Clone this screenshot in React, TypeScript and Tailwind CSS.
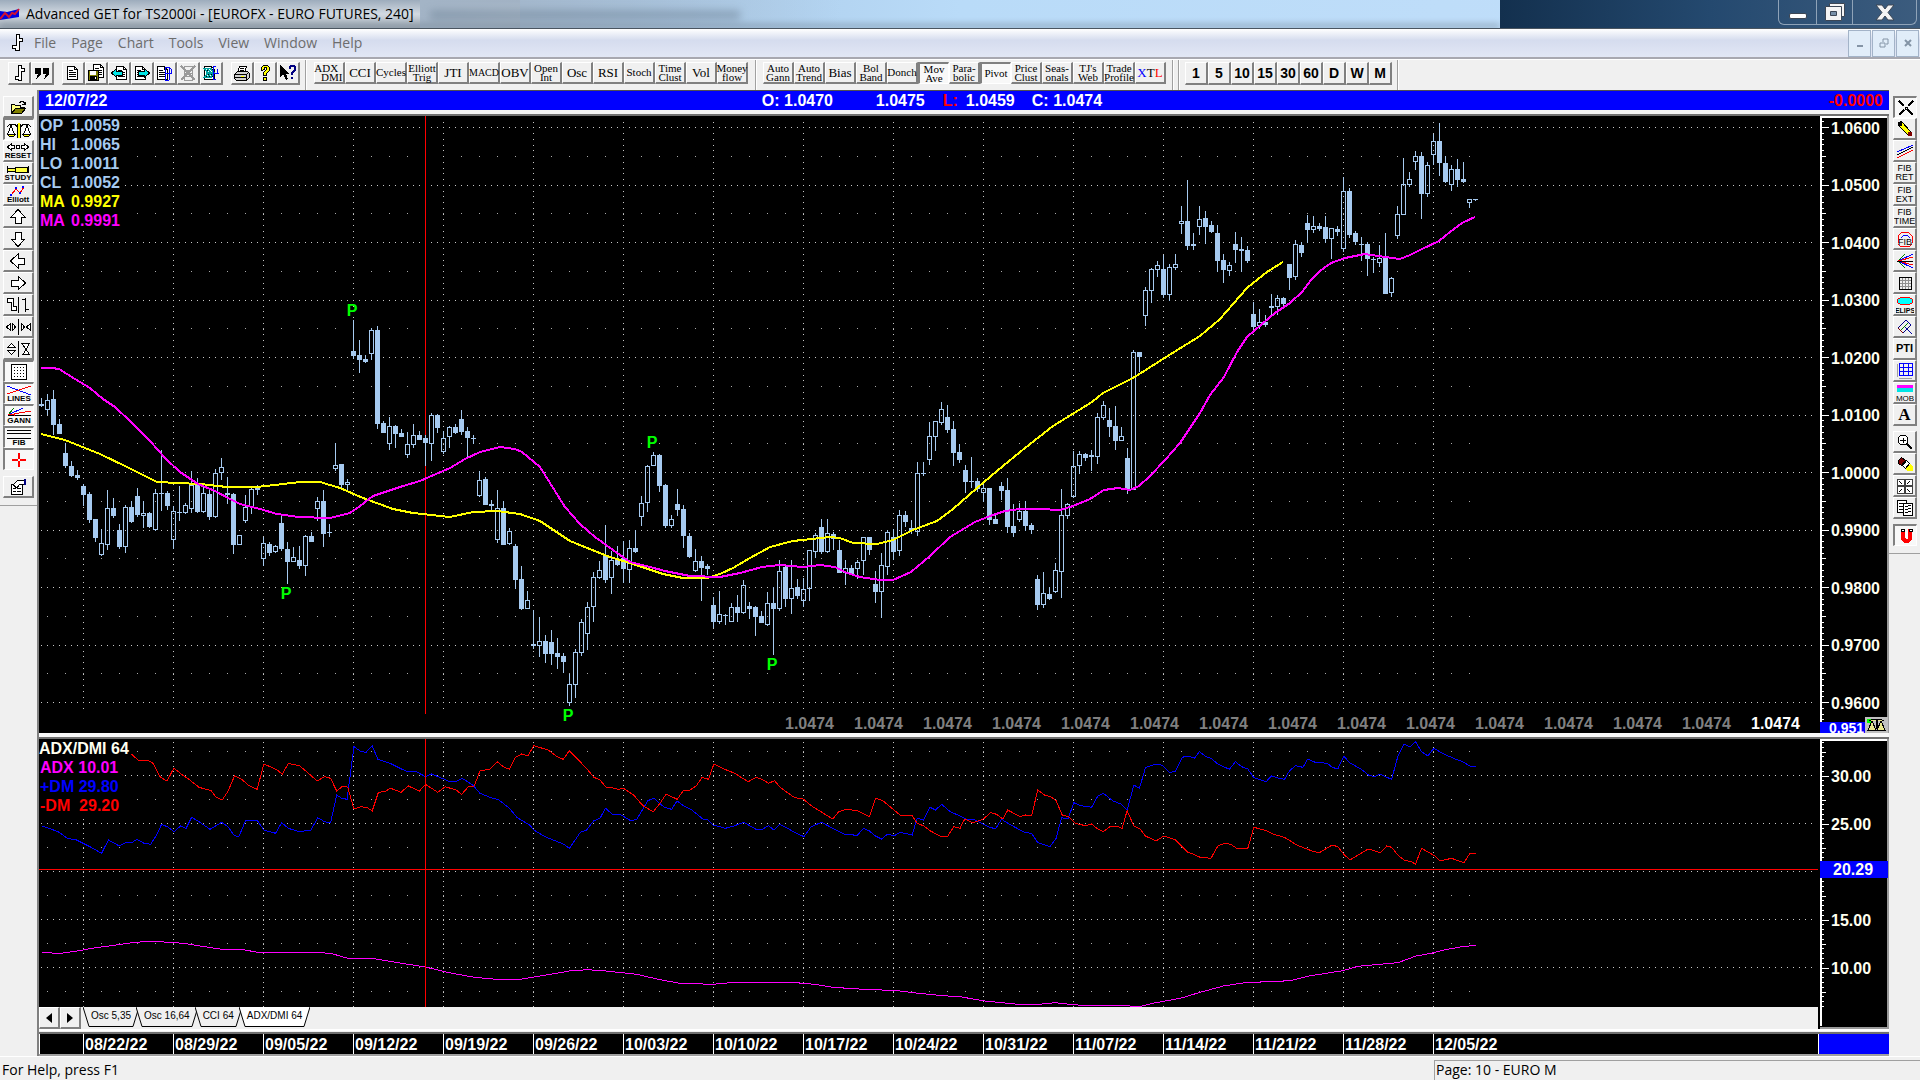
import React from "react";

type Point = [number, number];
// high, body top, body bottom, low, filled
type Candle = [number, number, number, number, number];

const LEFT = 39;
const CANDLE_STEP = 6;
const WEEK = 90;

const CANDLES: Candle[] = [
  [398, 404, 406, 407, 1], [394, 400, 410, 415, 0], [390, 399, 425, 435, 1], [419, 424, 434, 434, 1],
  [443, 453, 466, 468, 1], [461, 466, 476, 477, 1], [470, 475, 478, 480, 1], [484, 486, 495, 506, 1],
  [492, 494, 520, 523, 1], [519, 519, 538, 542, 1], [529, 543, 555, 556, 0], [490, 508, 545, 550, 0],
  [498, 508, 516, 518, 1], [524, 530, 547, 549, 1], [505, 507, 547, 553, 0], [501, 507, 522, 523, 1],
  [488, 496, 515, 517, 1], [501, 513, 516, 528, 0], [512, 513, 527, 528, 1], [489, 493, 530, 531, 0],
  [450, 493, 494, 511, 1], [491, 493, 506, 510, 1], [506, 511, 540, 549, 0], [486, 512, 513, 521, 1],
  [503, 505, 513, 514, 0], [471, 485, 509, 513, 0], [478, 485, 512, 513, 1], [484, 493, 512, 513, 0],
  [489, 494, 517, 520, 1], [469, 473, 517, 518, 0], [458, 467, 473, 480, 0], [477, 493, 495, 504, 1],
  [493, 494, 545, 554, 1], [535, 535, 545, 545, 0], [495, 507, 521, 523, 0], [487, 489, 507, 514, 0],
  [485, 488, 490, 495, 1], [537, 543, 559, 566, 0], [542, 544, 553, 556, 1], [545, 546, 552, 553, 0],
  [514, 523, 549, 551, 1], [542, 549, 562, 584, 1], [547, 557, 562, 562, 0], [546, 560, 566, 569, 1],
  [535, 536, 566, 576, 0], [532, 536, 542, 542, 1], [497, 501, 509, 521, 0], [490, 501, 534, 547, 1],
  [524, 532, 533, 537, 1], [443, 465, 469, 471, 0], [464, 464, 485, 490, 1], [479, 482, 485, 490, 0],
  [320, 351, 356, 359, 1], [340, 355, 360, 373, 1], [355, 359, 362, 363, 1], [328, 330, 354, 360, 0],
  [326, 330, 424, 429, 1], [421, 423, 433, 433, 1], [417, 426, 444, 450, 0], [425, 426, 434, 448, 1],
  [429, 433, 437, 437, 1], [432, 444, 455, 458, 0], [424, 435, 445, 448, 0], [431, 435, 440, 440, 1],
  [435, 438, 443, 466, 1], [413, 415, 444, 461, 0], [414, 415, 428, 433, 1], [431, 438, 452, 454, 0],
  [426, 427, 437, 448, 0], [424, 427, 433, 434, 1], [410, 419, 432, 435, 1], [427, 431, 438, 458, 1],
  [435, 438, 439, 444, 1], [471, 480, 496, 497, 0], [477, 479, 505, 505, 1], [500, 504, 506, 512, 1],
  [490, 508, 540, 543, 0], [501, 508, 545, 545, 1], [528, 531, 544, 545, 0], [544, 546, 580, 589, 1],
  [566, 579, 609, 610, 1], [591, 600, 609, 609, 0], [610, 644, 646, 649, 1], [617, 641, 646, 657, 0],
  [635, 641, 654, 663, 1], [630, 642, 654, 665, 1], [638, 653, 657, 669, 1], [653, 656, 662, 673, 1],
  [674, 684, 703, 706, 0], [649, 652, 685, 698, 0], [619, 622, 653, 656, 0], [602, 607, 634, 650, 0],
  [572, 577, 607, 622, 0], [561, 570, 578, 579, 0], [525, 555, 580, 583, 1], [551, 560, 578, 594, 0],
  [546, 559, 565, 566, 1], [541, 558, 569, 583, 1], [540, 548, 570, 583, 0], [530, 548, 552, 553, 1],
  [496, 503, 517, 526, 0], [465, 466, 503, 512, 0], [452, 455, 466, 466, 0], [454, 455, 486, 492, 1],
  [484, 485, 526, 528, 1], [515, 519, 526, 528, 0], [489, 504, 510, 516, 1], [505, 509, 536, 548, 1],
  [533, 536, 557, 558, 1], [549, 561, 571, 572, 0], [556, 561, 568, 601, 1], [564, 566, 569, 575, 1],
  [597, 605, 622, 628, 1], [591, 614, 622, 624, 0], [614, 615, 616, 625, 1], [603, 607, 622, 622, 0],
  [595, 607, 613, 622, 1], [580, 585, 613, 614, 0], [602, 606, 609, 619, 1], [606, 607, 617, 636, 1],
  [611, 616, 623, 623, 1], [592, 603, 625, 626, 0], [587, 603, 609, 655, 1], [560, 571, 609, 611, 0],
  [565, 567, 599, 607, 1], [560, 588, 599, 614, 0], [579, 587, 596, 599, 1], [578, 589, 601, 607, 0],
  [550, 550, 589, 601, 0], [533, 535, 552, 558, 0], [519, 527, 552, 554, 1], [519, 533, 552, 553, 0],
  [532, 534, 539, 550, 1], [540, 550, 573, 573, 1], [560, 568, 573, 585, 0], [565, 568, 574, 574, 1],
  [560, 562, 569, 579, 0], [537, 537, 561, 575, 0], [537, 537, 550, 555, 1], [571, 584, 592, 603, 1],
  [553, 565, 592, 618, 0], [530, 532, 567, 575, 0], [529, 537, 552, 560, 1], [510, 515, 551, 556, 0],
  [511, 515, 522, 527, 1], [520, 528, 531, 534, 1], [462, 473, 532, 536, 0], [462, 473, 474, 476, 1],
  [422, 436, 460, 465, 0], [421, 421, 437, 451, 0], [402, 409, 423, 425, 0], [405, 417, 430, 433, 1],
  [421, 429, 453, 466, 1], [444, 452, 460, 463, 1], [465, 470, 482, 493, 1], [457, 481, 482, 488, 1],
  [478, 481, 489, 492, 1], [483, 488, 493, 502, 0], [488, 488, 520, 525, 1], [514, 519, 524, 524, 1],
  [482, 486, 491, 500, 1], [478, 490, 527, 533, 1], [504, 526, 533, 537, 1], [503, 511, 520, 522, 0],
  [501, 511, 526, 531, 1], [523, 525, 530, 534, 1], [575, 579, 605, 610, 1], [572, 593, 605, 608, 0],
  [587, 594, 599, 600, 1], [563, 570, 592, 593, 0], [489, 515, 572, 598, 0], [503, 504, 516, 519, 0],
  [451, 466, 497, 498, 0], [451, 454, 466, 474, 0], [453, 454, 458, 461, 1], [450, 455, 457, 471, 1],
  [413, 417, 457, 464, 0], [401, 405, 418, 420, 0], [408, 420, 427, 437, 1], [406, 426, 441, 450, 1],
  [427, 436, 441, 441, 0], [448, 458, 490, 494, 1], [350, 352, 490, 490, 0], [352, 352, 357, 372, 1],
  [287, 290, 316, 326, 0], [268, 269, 291, 303, 0], [261, 265, 270, 277, 0], [255, 269, 295, 298, 1],
  [264, 267, 295, 301, 0], [254, 264, 268, 270, 0], [206, 221, 224, 234, 0], [180, 221, 246, 250, 1],
  [233, 244, 246, 250, 1], [206, 219, 227, 235, 0], [211, 218, 227, 244, 1], [221, 225, 232, 233, 1],
  [225, 233, 261, 272, 1], [254, 260, 270, 283, 1], [262, 265, 271, 276, 0], [232, 244, 250, 263, 1],
  [237, 249, 251, 272, 1], [246, 250, 261, 263, 1], [302, 314, 327, 329, 1], [309, 322, 326, 329, 0],
  [315, 322, 325, 327, 1], [294, 306, 308, 315, 1], [295, 298, 307, 315, 0], [297, 298, 304, 307, 1],
  [264, 264, 278, 290, 1], [240, 244, 277, 280, 0], [242, 245, 253, 257, 1], [215, 223, 230, 243, 1],
  [216, 226, 230, 233, 0], [223, 226, 229, 231, 1], [216, 227, 239, 243, 1], [228, 228, 239, 259, 0],
  [226, 229, 232, 236, 1], [177, 191, 249, 252, 0], [188, 191, 235, 238, 1], [231, 233, 242, 245, 1],
  [237, 244, 245, 261, 1], [242, 244, 259, 276, 1], [257, 259, 260, 273, 1], [245, 258, 263, 267, 0],
  [233, 257, 294, 294, 1], [277, 278, 293, 297, 0], [206, 214, 236, 239, 0], [158, 184, 215, 215, 0],
  [172, 179, 185, 187, 0], [151, 156, 162, 170, 0], [152, 156, 194, 219, 1], [162, 165, 194, 197, 0],
  [134, 141, 155, 165, 0], [123, 141, 163, 176, 1], [156, 163, 182, 183, 1], [165, 169, 185, 191, 0],
  [159, 169, 180, 187, 1], [162, 179, 182, 183, 1], [199, 199, 203, 208, 0], [199, 199, 200, 201, 1],
];

const MA_SLOW: Point[] = [
  [41, 368], [52, 368], [59, 369], [75, 379], [90, 388], [103, 399], [115, 407], [130, 421], [150, 441], [165, 458],
  [180, 472], [198, 484], [215, 491], [230, 499], [240, 504], [260, 509], [277, 514], [298, 517], [330, 518],
  [350, 513], [360, 506], [373, 496], [400, 487], [420, 481], [436, 474], [450, 468], [465, 459], [480, 452],
  [500, 447], [515, 449], [522, 452], [540, 467], [555, 491], [565, 507], [580, 524], [595, 537], [613, 550],
  [630, 562], [650, 567], [665, 571], [690, 576], [720, 577], [740, 573], [762, 567], [780, 565], [803, 567],
  [820, 565], [835, 567], [847, 573], [860, 577], [880, 580], [893, 580], [911, 572], [930, 556], [950, 537],
  [975, 522], [990, 516], [1005, 511], [1020, 509], [1040, 509], [1060, 510], [1073, 506], [1090, 499],
  [1104, 490], [1118, 488], [1130, 490], [1139, 486], [1150, 476], [1165, 460], [1180, 443], [1200, 413],
  [1210, 395], [1224, 377], [1237, 352], [1247, 337], [1262, 324], [1275, 313], [1290, 303], [1302, 292],
  [1311, 280], [1320, 271], [1331, 263], [1345, 258], [1365, 254], [1385, 257], [1400, 259], [1410, 255],
  [1420, 250], [1439, 241], [1450, 232], [1462, 223], [1475, 217],
];

const MA_FAST: Point[] = [
  [41, 434], [65, 440], [100, 454], [127, 467], [145, 476], [157, 482], [200, 484], [227, 487], [257, 487],
  [283, 484], [300, 482], [320, 482], [340, 488], [363, 498], [393, 509], [413, 513], [450, 517], [473, 512],
  [497, 511], [520, 514], [540, 521], [570, 541], [607, 556], [633, 564], [663, 574], [683, 578], [707, 578],
  [720, 574], [733, 568], [750, 558], [770, 547], [793, 541], [830, 537], [840, 538], [853, 543], [877, 544],
  [893, 540], [913, 530], [937, 521], [953, 509], [977, 488], [997, 471], [1020, 452], [1053, 426], [1092, 402],
  [1103, 393], [1133, 378], [1163, 359], [1187, 344], [1200, 336], [1220, 319], [1247, 288], [1267, 272], [1283, 262],
];

const PIVOTS: Point[] = [[352, 316], [286, 599], [568, 721], [652, 448], [772, 670]];

// Study samples are stored in two halves at 49/30 units per pixel across and 3 down
const MINUS_DM: [Point[], Point[]] = [
  [
    [215, 162], [225, 180], [240, 180], [250, 190], [262, 232], [273, 243], [284, 204], [296, 222], [310, 240],
    [325, 262], [345, 272], [352, 290], [363, 300], [372, 275], [383, 228], [395, 238], [405, 255], [420, 268],
    [431, 192], [445, 203], [453, 210], [461, 223], [471, 190], [490, 198], [505, 222], [518, 243], [530, 230],
    [540, 235], [550, 273], [560, 258], [568, 262], [578, 327], [590, 320], [600, 323], [608, 333], [618, 277],
    [628, 275], [638, 265], [655, 277], [667, 258], [685, 273], [695, 253], [705, 265], [715, 277], [727, 260],
    [745, 270], [754, 283], [765, 260], [774, 260], [784, 213], [800, 207], [812, 185], [822, 200], [832, 208],
    [842, 172], [852, 162], [862, 168], [872, 137], [895, 150], [910, 170], [920, 178], [930, 152], [945, 180],
    [960, 210], [970, 232], [980, 240], [990, 262], [1000, 263], [1010, 268], [1018, 265], [1035, 285],
    [1050, 317], [1067, 335], [1078, 310], [1088, 282], [1106, 298], [1117, 270], [1127, 270], [1137, 258],
    [1147, 232], [1157, 238], [1166, 192], [1180, 205], [1200, 220], [1222, 245], [1235, 232], [1245, 238],
    [1255, 250], [1265, 242], [1275, 263], [1298, 293], [1312, 297], [1325, 317], [1345, 340], [1360, 357],
    [1370, 335], [1383, 328], [1400, 332], [1420, 350], [1430, 295], [1442, 302], [1460, 330], [1470, 345],
    [1490, 347], [1498, 370], [1508, 377], [1520, 393], [1535, 408], [1548, 408], [1558, 380], [1568, 385],
  ],
  [
    [0, 383], [8, 357], [20, 368], [30, 363], [38, 357], [50, 338], [60, 343], [70, 357], [78, 330], [98, 350],
    [107, 345], [117, 347], [127, 270], [138, 285], [148, 290], [157, 302], [167, 345], [178, 350], [188, 370],
    [205, 377], [215, 372], [225, 387], [234, 395], [245, 380], [255, 378], [265, 385], [273, 332], [284, 378],
    [294, 387], [303, 408], [320, 423], [333, 408], [352, 420], [372, 457], [382, 463], [392, 472], [410, 475],
    [421, 438], [432, 430], [442, 433], [452, 445], [470, 445], [480, 382], [500, 392], [512, 403], [530, 412],
    [550, 435], [575, 453], [587, 458], [608, 435], [617, 440], [628, 465], [637, 480], [652, 463], [667, 447],
    [687, 458], [697, 438], [705, 442], [715, 465], [725, 480], [737, 485], [744, 492], [754, 445], [765, 457],
    [775, 467], [784, 483], [803, 475], [823, 488], [833, 460], [843, 460],
  ],
];

const PLUS_DM: [Point[], Point[]] = [
  [
    [69, 378], [95, 395], [110, 415], [125, 420], [150, 443], [166, 460], [177, 420], [195, 438], [205, 428],
    [215, 428], [224, 418], [235, 430], [246, 433], [255, 408], [264, 373], [275, 382], [284, 395], [295, 378],
    [304, 385], [313, 352], [325, 365], [343, 388], [362, 367], [372, 380], [383, 407], [390, 410], [401, 362],
    [420, 361], [431, 390], [450, 400], [460, 368], [471, 385], [488, 395], [508, 390], [519, 353], [530, 365],
    [540, 368], [550, 285], [558, 295], [567, 298], [578, 140], [590, 155], [598, 157], [608, 137], [617, 178],
    [637, 190], [665, 215], [680, 215], [695, 230], [705, 222], [718, 232], [735, 245], [745, 245], [755, 235],
    [772, 255], [784, 280], [800, 292], [815, 300], [832, 325], [845, 353], [865, 375], [872, 390], [890, 410],
    [920, 432], [930, 445], [948, 397], [958, 390], [970, 362], [980, 355], [989, 325], [1000, 342], [1012, 342],
    [1030, 362], [1040, 358], [1058, 302], [1068, 295], [1085, 322], [1097, 328], [1106, 303], [1117, 318],
    [1130, 330], [1148, 357], [1155, 357], [1165, 375], [1185, 385], [1200, 377], [1215, 367], [1235, 388],
    [1243, 390], [1255, 377], [1264, 390], [1274, 373], [1298, 397], [1313, 410], [1325, 380], [1342, 367],
    [1360, 385], [1380, 403], [1400, 406], [1411, 385], [1420, 393], [1430, 408], [1440, 417], [1450, 402],
    [1460, 408], [1470, 397], [1490, 405], [1498, 355], [1508, 360], [1519, 322], [1528, 330], [1538, 313],
    [1552, 335], [1568, 348],
  ],
  [
    [0, 348], [10, 357], [25, 360], [48, 382], [58, 386], [68, 358], [80, 372], [105, 397], [117, 400], [127, 428],
    [147, 440], [157, 415], [166, 353], [176, 357], [186, 308], [197, 317], [215, 322], [225, 288], [234, 280],
    [250, 303], [264, 313], [273, 330], [284, 255], [293, 265], [303, 203], [315, 195], [325, 192], [333, 200],
    [343, 218], [352, 213], [363, 172], [372, 168], [383, 175], [391, 155], [402, 170], [410, 175], [421, 192],
    [440, 208], [450, 185], [460, 200], [470, 207], [480, 233], [500, 245], [509, 227], [520, 235], [530, 238],
    [538, 213], [548, 197], [560, 202], [568, 177], [580, 187], [600, 190], [608, 202], [617, 207], [627, 168],
    [636, 188], [655, 207], [667, 225], [677, 230], [686, 223], [705, 238], [715, 170], [725, 133], [735, 140],
    [744, 125], [754, 155], [764, 168], [774, 145], [790, 162], [810, 178], [818, 182], [833, 198], [843, 199],
  ],
];

const ADX: [Point[], Point[]] = [
  [
    [69, 758], [100, 760], [130, 752], [150, 745], [190, 735], [220, 727], [250, 724], [300, 730], [330, 739],
    [362, 748], [395, 748], [420, 757], [510, 757], [540, 760], [568, 775], [608, 775], [640, 785], [695, 801],
    [730, 817], [775, 832], [810, 838], [850, 838], [880, 829], [930, 813], [960, 809], [990, 813], [1040, 823],
    [1075, 838], [1110, 850], [1165, 853], [1200, 847], [1300, 848], [1330, 853], [1360, 862], [1420, 869],
    [1460, 871], [1500, 880], [1540, 887], [1568, 890],
  ],
  [
    [0, 890], [40, 903], [95, 913], [130, 913], [155, 908], [185, 914], [215, 918], [260, 917], [295, 919],
    [315, 910], [335, 903], [360, 895], [390, 878], [430, 858], [465, 848], [540, 842], [570, 828], [625, 812],
    [650, 799], [715, 788], [745, 768], [770, 760], [790, 750], [820, 740], [843, 736],
  ],
];

const DATES = [
  "08/22/22", "08/29/22", "09/05/22", "09/12/22", "09/19/22", "09/26/22", "10/03/22", "10/10/22",
  "10/17/22", "10/24/22", "10/31/22", "11/07/22", "11/14/22", "11/21/22", "11/28/22", "12/05/22",
];

const PRICES = [
  "1.0600", "1.0500", "1.0400", "1.0300", "1.0200", "1.0100", "1.0000", "0.9900", "0.9800", "0.9700", "0.9600",
];

const polyline = (pts: Point[]) => pts.map(([x, y]) => `${x},${y}`).join(" ");

const studyLine = ([first, second]: [Point[], Point[]]) =>
  [
    ...first.map(([x, y]) => [(x * 30) / 49, 700 + y / 3]),
    ...second.map(([x, y]) => [960 + (x * 30) / 49, 700 + y / 3]),
  ]
    .map(([x, y]) => `${x.toFixed(1)},${y.toFixed(1)}`)
    .join(" ");

// One pixel dots down every week line
const weekDots = (top: number, bottom: number, step: number) => {
  let d = "";
  for (let k = 0; k < DATES.length; k++) {
    for (let y = top; y < bottom; y += step) {
      d += `M${83 + k * WEEK} ${Math.round(y)}h1v1h-1z`;
    }
  }
  return d;
};

const PriceChart = () => (
  <svg className="block h-[617px] w-full bg-black" shapeRendering="crispEdges">
    <g transform="translate(-39 -116)">
      {PRICES.map((p, i) => {
        const y = Math.round(127 + i * 57.5);
        return <line key={p} x1={41} x2={1815} y1={y + 0.5} y2={y + 0.5} stroke="#c8c8c8" strokeDasharray="1 5" />;
      })}
      {PRICES.slice(1).map((p, i) => {
        const y = Math.round(155.5 + i * 57.5);
        return <line key={p} x1={47} x2={1471} y1={y + 0.5} y2={y + 0.5} stroke="#a8a8a8" strokeDasharray="1 17" />;
      })}
      <path d={weekDots(121.5, 712, 5.75)} fill="#c8c8c8" />
      <rect x={425} y={116} width={1} height={598} fill="#ff0000" />
      {CANDLES.map(([high, top, bottom, low, filled], i) => {
        const x = LEFT + 2 + i * CANDLE_STEP;
        return (
          <g key={i} fill="#a6caf0">
            {top > high && <rect x={x} y={high} width={1} height={top - high} />}
            {low > bottom && <rect x={x} y={bottom} width={1} height={low - bottom} />}
            {filled ? (
              <rect x={x - 2} y={top} width={5} height={bottom - top} />
            ) : (
              <rect x={x - 1.5} y={top + 0.5} width={4} height={bottom - top - 1} fill="none" stroke="#a6caf0" />
            )}
          </g>
        );
      })}
      <polyline points={polyline(MA_FAST)} fill="none" stroke="#ffff00" strokeWidth={2} />
      <polyline points={polyline(MA_SLOW)} fill="none" stroke="#ff00ff" strokeWidth={2} />
      <g className="text-base font-bold" fill="#00ff00" textAnchor="middle">
        {PIVOTS.map(([x, y]) => (
          <text key={x} x={x} y={y}>P</text>
        ))}
      </g>
      <g className="text-base font-bold">
        {Array.from({ length: 15 }, (_, i) => (
          <text key={i} x={785 + i * 69} y={729} fill={i === 14 ? "#ffffff" : "#808080"}>
            1.0474
          </text>
        ))}
      </g>
    </g>
  </svg>
);

const PriceAxis = () => (
  <svg className="block h-[617px] w-full bg-black" shapeRendering="crispEdges">
    <g transform="translate(-1818 -116)">
      <path d="M1820 116h67v2h-65v604h-2z" fill="#ffffff" />
      <path d="M1887 116h2v617h-2z" fill="#9a9a9a" />
      <g fill="#ffffff">
        {Array.from({ length: 105 }, (_, i) => (
          <rect
            key={i}
            x={1822}
            y={Math.round(121.25 + i * 5.75)}
            width={i % 10 === 1 ? 7 : i % 10 === 6 ? 4 : 2}
            height={1}
          />
        ))}
      </g>
      <g className="text-base font-bold" fill="#fffff0">
        {PRICES.map((p, i) => (
          <text key={p} x={1831} y={Math.round(133.5 + i * 57.5)}>{p}</text>
        ))}
      </g>
      <rect x={1820} y={722} width={67} height={11} fill="#0000ff" />
      <text className="text-sm font-bold" x={1829} y={733} fill="#ffffff">0.951</text>
      <rect x={1865} y={717} width={23} height={16} fill="#c0c0c0" />
      <path d="M1867 719h5v4h-5z" fill="#00ff00" />
      <path d="M1868 730l4-9 4 9zM1877 730l4-9 4 9zM1867 730h19M1869 721l4-2h7l4 2" fill="#e8e88c" stroke="#000" />
      <path d="M1876 719h2v10h-2z" fill="#000" />
    </g>
  </svg>
);

const StudyChart = () => (
  <svg className="block h-[268px] w-full bg-black" shapeRendering="crispEdges">
    <g transform="translate(-39 -739)">
      {[775, 823, 871, 919, 967].map((y) => (
        <line key={y} x1={41} x2={1815} y1={y + 0.5} y2={y + 0.5} stroke="#c8c8c8" strokeDasharray="1 5" />
      ))}
      {[751, 799, 847, 895, 943, 991].map((y) => (
        <line key={y} x1={47} x2={1471} y1={y + 0.5} y2={y + 0.5} stroke="#a8a8a8" strokeDasharray="1 17" />
      ))}
      <path d={weekDots(742, 1006, 4.8)} fill="#c8c8c8" />
      <polyline points={studyLine(PLUS_DM)} fill="none" stroke="#0000ff" />
      <polyline points={studyLine(MINUS_DM)} fill="none" stroke="#ff0000" />
      <polyline points={studyLine(ADX)} fill="none" stroke="#ff00ff" />
      <rect x={425} y={739} width={1} height={268} fill="#ff0000" />
      <rect x={39} y={869} width="100%" height={1} fill="#ff0000" />
    </g>
  </svg>
);

const StudyAxis = () => (
  <svg className="block h-[290px] w-full bg-black" shapeRendering="crispEdges">
    <g transform="translate(-1818 -739)">
      <path d="M1820 739h67v2h-65v285h-2z" fill="#ffffff" />
      <path d="M1887 739h2v290h-69v-2h67z" fill="#9a9a9a" />
      <g fill="#ffffff">
        {Array.from({ length: 56 }, (_, i) => (
          <rect
            key={i}
            x={1822}
            y={Math.round(742 + i * 4.8)}
            width={i % 10 === 7 ? 7 : i % 10 === 2 ? 4 : 2}
            height={1}
          />
        ))}
      </g>
      <g className="text-base font-bold" fill="#fffff0">
        <text x={1831} y={782}>30.00</text>
        <text x={1831} y={830}>25.00</text>
        <text x={1831} y={926}>15.00</text>
        <text x={1831} y={974}>10.00</text>
        <rect x={1820} y={861} width={68} height={17} fill="#0000ff" />
        <text x={1833} y={875}>20.29</text>
      </g>
    </g>
  </svg>
);

const raised =
  "border border-b-2 border-r-2 border-t-white border-l-white border-b-[#808080] border-r-[#808080] bg-[#f0f0f0]";
const pressed =
  "border border-t-2 border-l-2 border-t-[#808080] border-l-[#808080] border-b-white border-r-white bg-[#f8f8f8]";

const TextButton = ({ label, on }: { label: string; on?: boolean }) => (
  <button
    className={`flex h-[22px] w-[31px] items-center justify-center text-center font-[Liberation_Serif,serif] whitespace-pre text-black ${
      on ? pressed : raised
    } ${label.includes("\n") ? "text-[11px] leading-[9px]" : label.length > 4 ? "text-[11px]" : label === "MACD" ? "text-[10px]" : "text-[13px]"}`}
  >
    {label === "XTL" ? (
      <span>
        <span className="text-[#0000ff]">X</span>T<span className="text-[#ff0000]">L</span>
      </span>
    ) : (
      label
    )}
  </button>
);

const IconButton = ({ title, children }: { title: string; children: React.ReactNode }) => (
  <button title={title} className={`flex size-[23px] items-center justify-center ${raised}`}>
    {children}
  </button>
);

const Icon = ({ w = 18, h = 18, children }: { w?: number; h?: number; children: React.ReactNode }) => (
  <svg
    width={w}
    height={h}
    viewBox={`0 0 ${w} ${h}`}
    fill="none"
    stroke="#000"
    shapeRendering="crispEdges"
    className="shrink-0"
  >
    {children}
  </svg>
);

const BarIcon = () => (
  <Icon>
    <path d="M8.5 1.5h3v3h3v3h-3v9h-3v-1h-3v-3h3z" fill="#fff" />
  </Icon>
);

const Page = ({ x = 0, y = 0 }: { x?: number; y?: number }) => (
  <g transform={`translate(${x} ${y})`}>
    <path d="M3.5 2.5h7l3 3v10h-10z" fill="#fff" />
    <path d="M10.5 2.5v3h3M5 6.5h4M5 8.5h7M5 10.5h7M5 12.5h7" />
  </g>
);

const FILE_GROUP = [
  { title: "New Page", icon: <Icon><Page /></Icon> },
  {
    title: "Save Page",
    icon: (
      <Icon>
        <Page x={3} y={-2} />
        <path d="M1.5 6.5h10v10h-10z" fill="#808000" />
        <path d="M3 7h6v4H3z" fill="#fff" stroke="none" />
        <path d="M3 12h7v4H3z" fill="#000" stroke="none" />
        <path d="M8 13h1v2H8z" fill="#fff" stroke="none" />
      </Icon>
    ),
  },
  {
    title: "Previous Page",
    icon: <Icon><Page x={3} /><path d="M1.5 9l5-4.5V7h6v4h-6v2.500z" fill="#00e5e5" /></Icon>,
  },
  {
    title: "Next Page",
    icon: <Icon><Page x={-1} /><path d="M16.500 9l-5-4.500V7h-6v4h6v2.500z" fill="#00e5e5" /></Icon>,
  },
  {
    title: "Go To Page",
    icon: <Icon><Page x={-2} /><path d="M13 3.500h-3l-1 2v9l1 2h3M13 3v13M15.500 5v4M13 3.500l3 2M10 9h6" stroke="#0000ff" /></Icon>,
  },
  {
    title: "Delete Page",
    icon: (
      <Icon>
        <path d="M5 2h8v14H5zM6 6h7M6 9h7M6 12h7" stroke="#9a9a9a" />
        <path d="M2 2l14 14M16 2L2 16" stroke="#9a9a9a" strokeWidth={2} />
      </Icon>
    ),
  },
  {
    title: "Refresh Page",
    icon: (
      <Icon>
        <Page x={-1} />
        <path d="M2 4l4 5-4 5M5 4l4 5-4 5M8 4l4 5-4 5" stroke="#00a0a0" strokeWidth={2} />
        <path d="M14 2.500h-3v13h3M15.500 5v4M11 9h6" stroke="#0000ff" />
      </Icon>
    ),
  },
];

const HELP_GROUP = [
  {
    title: "Print",
    icon: (
      <Icon>
        <path d="M6.500 2.500h7l-2 6h-7z" fill="#fff" />
        <path d="M7 4.500h4M7 6.500h4" />
        <path d="M1.500 10.500l3-3h10l2 2v4l-3 3h-10l-2-2z" fill="#d0d0d0" />
        <path d="M2 10.500h11l3-2M13.500 11v5M2 13.500h11" />
        <path d="M8 12h3" stroke="#ffff00" />
      </Icon>
    ),
  },
  {
    title: "About",
    icon: (
      <Icon>
        <path d="M5.500 6.500v-3l2-2h4l2 2v3l-3 3v2h-3v-3l3-3v-2h-2v2z" fill="#ffff00" />
        <path d="M7.500 13.500h3v3h-3z" fill="#ffff00" />
      </Icon>
    ),
  },
  {
    title: "Context Help",
    icon: (
      <Icon>
        <path d="M1 1v12l3-3 3 6 2-1-2-5h4z" fill="#000" stroke="none" />
        <path d="M11 5V3l1-1h3l1 1v3l-3 3v2M13 13v2" stroke="#000080" strokeWidth={2} />
      </Icon>
    ),
  },
];

const STUDIES = [
  "ADX  \n  DMI", "CCI", "Cycles", "Elliott\nTrig", "JTI", "MACD", "OBV", "Open\nInt", "Osc", "RSI", "Stoch",
  "Time\nClust", "Vol", "Money\nflow",
];
const STUDIES_2 = [
  "Auto\nGann", "Auto\nTrend", "Bias", "Bol\nBand", "Donch", "Mov\nAve", "Para-\nbolic", "Pivot", "Price\nClust",
  "Seas-\nonals", "TJ's\nWeb", "Trade\nProfile", "XTL",
];
const INTERVALS = ["1", "5", "10", "15", "30", "60", "D", "W", "M"];

const Divider = () => <div className="h-full w-[2px] border-r border-l border-r-white border-l-[#a0a0a0]" />;

// Caption under a small picture, as on the side bars
const Caption = ({ children }: { children: string }) => (
  <span className="text-[8px] leading-[7px] font-bold text-black">{children}</span>
);

const CHART_TOOLS: { title: string; on?: boolean; caption?: string; icon: React.ReactNode }[] = [
  {
    title: "Open",
    icon: (
      <Icon w={24}>
        <path d="M5.500 15.500v-9h3l1 1h5v2h4l-4 6z" fill="#ffff80" />
        <path d="M5.500 15.500l4-5h10l-4 5z" fill="#808000" />
        <path d="M13 4.500h1l1-1h2l2 2M16 6.500h3v-3" />
      </Icon>
    ),
  },
  {
    title: "Scales",
    on: true,
    icon: (
      <Icon w={26}>
        <path d="M1.500 13.500l3.500-9 3.500 9zM17.500 13.500l3.500-9 3.500 9z" fill="#fff" />
        <path d="M1.500 13.500h8l-2 2h-4zM16.500 13.500h8l-2 2h-4z" fill="#ffff00" />
        <path d="M1 5.500l3-2h5l2 2h4l2-2h5l3 2" />
        <path d="M11.500 3v14M14.500 3v14" />
        <path d="M13 2v15" stroke="#ffff00" strokeWidth={2} />
      </Icon>
    ),
  },
  {
    title: "Reset",
    caption: "RESET",
    icon: (
      <Icon w={24} h={10}>
        <path d="M1.500 5l4-3.500v2h3v3h-3v2zM22.500 5l-4-3.500v2h-3v3h3v2z" fill="#fff" />
        <path d="M10.500 3.500h3v3h-3z" fill="#fff" />
      </Icon>
    ),
  },
  {
    title: "Study",
    caption: "STUDY",
    icon: (
      <Icon w={24} h={9}>
        <path d="M1.500 3.500h8v3h-8zM9.500 2.500h12v5h-12z" fill="#ffff40" />
        <path d="M1.500 1v7M22.500 1v7" />
      </Icon>
    ),
  },
  {
    title: "Elliott",
    caption: "Elliott",
    icon: (
      <Icon w={24} h={10}>
        <path d="M5 9l5-6 4 4 4-6" stroke="#ff0000" />
        <path d="M9 1h2v2H9zM13 6h2v2h-2zM16 0h2v2h-2zM4 8h2v2H4z" fill="#0000ff" stroke="none" />
      </Icon>
    ),
  },
  { title: "Up", icon: <Icon><path d="M9 1.500l7 7.500h-4v6.500H6V9H2z" fill="#fff" /></Icon> },
  { title: "Down", icon: <Icon><path d="M9 16.500L2 9h4V2.500h6V9h4z" fill="#fff" /></Icon> },
  { title: "Left", icon: <Icon><path d="M1.500 9L9 2v4h6.500v6H9v4z" fill="#fff" /></Icon> },
  { title: "Right", icon: <Icon><path d="M16.500 9L9 2v4H2.500v6H9v4z" fill="#fff" /></Icon> },
  {
    title: "Bar Style",
    icon: (
      <Icon w={26}>
        <path d="M2.500 2.500h6v8h3v4h-5v-8h-4z" fill="#fff" />
        <path d="M13.500 1v16M17 3.500h3M20.500 2v14M21 13.500h3" />
      </Icon>
    ),
  },
  {
    title: "Bar Spacing",
    icon: (
      <Icon w={26}>
        <path d="M5.500 5.500v7l-4-3.500zM7.500 5.500v7l3-3.500zM13.500 1v16M16.500 5.500v7l3-3.500zM25.500 5.500v7l-4-3.500z" fill="#fff" />
      </Icon>
    ),
  },
  {
    title: "Vertical Scale",
    icon: (
      <Icon w={24}>
        <path d="M1.500 7.500h8L5.500 3.500zM1.500 10.500h8L5.500 14.500zM12.500 1v16M15.500 3.500h8L17 14.500h-1.500 8L17 5z" fill="#fff" />
      </Icon>
    ),
  },
  {
    title: "Grid",
    on: true,
    icon: (
      <Icon>
        <path d="M1.500 1.500h15v15h-15z" fill="#fff" />
        <path d="M4 4.500h11M4 7.500h11M4 10.500h11M4 13.500h11" strokeDasharray="1 2" />
      </Icon>
    ),
  },
  {
    title: "Lines",
    on: true,
    caption: "LINES",
    icon: (
      <Icon w={24} h={10}>
        <path d="M0 1l24 9" stroke="#0000ff" />
        <path d="M0 9l24-8" stroke="#ff0000" />
      </Icon>
    ),
  },
  {
    title: "Gann",
    on: true,
    caption: "GANN",
    icon: (
      <Icon w={24} h={10}>
        <path d="M1 8.500h23" />
        <path d="M1 8l6-7" stroke="#008000" />
        <path d="M1 8l15-7" stroke="#0000ff" />
        <path d="M1 8l23-4M1 7h6v2" stroke="#ff0000" />
      </Icon>
    ),
  },
  {
    title: "Fib",
    on: true,
    caption: "FIB",
    icon: <Icon w={24} h={10}><path d="M0 1.500h24M0 4.500h24M0 9.500h24" /></Icon>,
  },
  {
    title: "Crosshair",
    on: true,
    icon: <Icon><path d="M9 2v6M9 10v6M2 9h6M10 9h6" stroke="#ff0000" strokeWidth={2} /></Icon>,
  },
];

const DRAW_TOOLS: { title: string; on?: boolean; text?: string; icon?: React.ReactNode }[] = [
  {
    title: "Pointer",
    on: true,
    icon: <Icon><path d="M2 2l5 5M11 11l5 5M16 2l-5 5M7 11l-5 5" strokeWidth={2} /><path d="M8 8h2v2H8z" /></Icon>,
  },
  {
    title: "Draw",
    icon: (
      <Icon>
        <path d="M2.500 2.500l3-1 9 10-3 3-9-9z" fill="#ffff00" />
        <path d="M2 2h3v3H2z" fill="#000" />
        <path d="M12 12h4v4h-4z" fill="#800000" stroke="none" />
      </Icon>
    ),
  },
  {
    title: "Parallel Lines",
    icon: (
      <Icon>
        <path d="M1 10l16-7" stroke="#0000ff" />
        <path d="M1 13l16-8" />
        <path d="M1 16l16-8" stroke="#ff0000" />
      </Icon>
    ),
  },
  { title: "Fibonacci Retracement", text: "FIB\nRET" },
  { title: "Fibonacci Extension", text: "FIB\nEXT" },
  { title: "Fibonacci Time", text: "FIB\nTIME" },
  {
    title: "Fibonacci Circle",
    icon: (
      <Icon>
        <path d="M2 13V6l4-4h6l4 4v7" stroke="#ff0000" />
        <path d="M5 8l3-3h3l3 3" stroke="#0000ff" />
        <path d="M2 14l2 2h10l2-2" stroke="#ff0000" />
        <text x={9} y={15} textAnchor="middle" fill="#000" stroke="none" className="text-[9px]">FIB</text>
      </Icon>
    ),
  },
  {
    title: "Gann Fan",
    icon: (
      <Icon>
        <path d="M2 9l7-7M2 9l7 7" stroke="#008000" />
        <path d="M2 9l15-7M2 9l15 7" stroke="#0000ff" />
        <path d="M2 9l15-4M2 9l15 4" stroke="#ff0000" />
        <path d="M1 9.500h16" />
      </Icon>
    ),
  },
  {
    title: "Gann Box",
    icon: (
      <Icon>
        <path d="M6.500 3v12M9.500 3v12M12.500 3v12M3 6.500h12M3 9.500h12M3 12.500h12" stroke="#909090" />
        <path d="M3.500 3.500h12v12h-12z" />
      </Icon>
    ),
  },
  {
    title: "Ellipse",
    icon: (
      <Icon>
        <ellipse cx={9} cy={5} rx={8} ry={4} fill="#00ffff" stroke="#ff0000" />
        <text x={9} y={17} textAnchor="middle" fill="#000" stroke="none" className="text-[7px] font-bold">ELIPS</text>
      </Icon>
    ),
  },
  {
    title: "Andrews Pitchfork",
    icon: (
      <Icon>
        <path d="M10 2l5 5M9 9l7 7" stroke="#0000a0" />
        <path d="M10 2l-8 8M15 7l-8 8" stroke="#000080" />
        <path d="M12 5l-8 8" stroke="#008000" />
        <path d="M2 10l5 5" stroke="#800000" />
      </Icon>
    ),
  },
  { title: "Profit Taking Index", text: "PTI" },
  {
    title: "Box",
    icon: (
      <Icon>
        <path d="M3.500 1.500h13v12h-13zM7.500 1.500v12M12.500 1.500v12M3.500 5.500h13M3.500 9.500h13" stroke="#0000ff" />
        <path d="M1.500 2v13M3 16.500h13" stroke="#a0a0a0" />
      </Icon>
    ),
  },
  {
    title: "Make or Break",
    icon: (
      <Icon>
        <path d="M1 1h16v3H1z" fill="#ff00ff" stroke="none" />
        <path d="M1 4h16v4H1z" fill="#00e5e5" stroke="none" />
        <text x={9} y={17} textAnchor="middle" fill="#000" stroke="none" className="text-[8px]">MOB</text>
      </Icon>
    ),
  },
  { title: "Text", text: "A" },
];

const EDIT_TOOLS: { title: string; icon: React.ReactNode }[] = [
  {
    title: "Zoom",
    icon: (
      <Icon>
        <circle cx={7} cy={7} r={5} fill="#fff" />
        <path d="M4 7.500h6M7.500 5v5M5 7.500h5" />
        <path d="M11 11l5 5" strokeWidth={2} />
      </Icon>
    ),
  },
  {
    title: "Erase",
    icon: (
      <Icon>
        <path d="M2.500 5.500l3-3 4 3-4 5-3-2z" fill="#800000" />
        <path d="M6.500 10.500l4-5 3 3-4 5z" fill="#fff" />
        <path d="M9 14l5-5 3 3v4h-6z" fill="#ffff00" stroke="none" />
      </Icon>
    ),
  },
  {
    title: "Tile",
    icon: (
      <Icon>
        <path d="M1.500 2.500h7v6h-7zM9.500 2.500h7v6h-7zM1.500 9.500h7v7h-7zM9.500 9.500h7v7h-7z" fill="#fff" stroke="#404040" />
        <path d="M3 4l3 3M14 4l-3 3M3 15l3-3M14 15l-3-3" />
      </Icon>
    ),
  },
  {
    title: "Cascade",
    icon: (
      <Icon>
        <path d="M1.500 1.500h9v12h-9z" fill="#fff" />
        <path d="M7.500 4.500h9v12h-9z" fill="#fff" />
        <path d="M3 5l4-1M3 8l4-1M3 11l4-1M9 8l6-2M9 11l6-2M9 14l6-2" />
      </Icon>
    ),
  },
];

const DrawText = ({ text }: { text: string }) => {
  if (text === "A") return <span className="font-[Liberation_Serif,serif] text-[17px] leading-none font-bold">A</span>;
  if (text === "PTI") return <span className="text-[11px] leading-none font-bold">PTI</span>;
  return <span className="text-center text-[9px] leading-[9px] whitespace-pre">{text}</span>;
};

const Toolbar = () => (
  <div className="flex h-[31px] shrink-0 items-start border-t border-t-white bg-[#f0f0f0]">
    <div className="flex pt-[2px] pl-2">
      <IconButton title="Chart"><BarIcon /></IconButton>
      <IconButton title="Quotes">
        <Icon>
          <path
            d="M2 4h6v6l-4 5H3l2-5H2zM10 4h6v6l-4 5h-1l2-5h-3z"
            fill="#000"
            stroke="none"
          />
        </Icon>
      </IconButton>
    </div>
    <div className="flex pt-[2px] pl-2">
      {FILE_GROUP.map((b) => <IconButton key={b.title} title={b.title}>{b.icon}</IconButton>)}
    </div>
    <div className="flex pt-[2px] pr-[5px] pl-2">
      {HELP_GROUP.map((b) => <IconButton key={b.title} title={b.title}>{b.icon}</IconButton>)}
    </div>
    <Divider />
    <div className="flex px-[7px] pt-[2px]">
      {STUDIES.map((s) => <TextButton key={s} label={s} />)}
    </div>
    <Divider />
    <div className="flex px-[6px] pt-[2px]">
      {STUDIES_2.map((s) => <TextButton key={s} label={s} on={s === "Mov\nAve" || s === "Pivot"} />)}
    </div>
    <Divider />
    <div className="w-1" />
    <Divider />
    <div className="flex px-[5px] pt-[2px]">
      {INTERVALS.map((t) => (
        <button key={t} className={`size-[23px] text-sm leading-none font-bold text-black ${raised}`}>
          {t}
        </button>
      ))}
    </div>
    <Divider />
  </div>
);

const SideButton = ({ title, on, wide, children }: { title: string; on?: boolean; wide?: boolean; children: React.ReactNode }) => (
  <button
    title={title}
    className={`flex h-[22px] flex-col items-center justify-center overflow-hidden text-black ${
      wide ? "w-[31px]" : "w-6"
    } ${on ? pressed : raised}`}
  >
    {children}
  </button>
);

const ChartToolbar = () => (
  <aside className="w-[37px] shrink-0 bg-[#f0f0f0]">
    <div className="flex flex-col border-b border-b-[#a0a0a0] pt-[6px] pb-[7px] pl-[3px]">
      {CHART_TOOLS.map((t) => (
        <SideButton key={t.title} title={t.title} on={t.on} wide>
          {t.icon}
          {t.caption && <Caption>{t.caption}</Caption>}
        </SideButton>
      ))}
      <div className="h-[6px]" />
      <SideButton title="Properties" wide>
        <Icon>
          <path d="M2.500 6.500h11v10h-11z" fill="#fff" />
          <path d="M4 10.500h3M8 10.500h4M4 13.500h3M8 13.500h4" />
          <path d="M4 7l5-5h6v4h-4l-3 4z" fill="#fff" />
          <path d="M15 1h2v6h-2z" fill="#000080" stroke="none" />
        </Icon>
      </SideButton>
    </div>
  </aside>
);

const DrawToolbar = () => (
  <aside className="w-[31px] shrink-0 bg-[#f0f0f0]">
    <div className="flex flex-col border-b border-b-[#a0a0a0] pt-[6px] pb-[7px] pl-[4px]">
      {DRAW_TOOLS.map((t) => (
        <SideButton key={t.title} title={t.title} on={t.on}>
          {t.icon ?? <DrawText text={t.text ?? ""} />}
        </SideButton>
      ))}
      <div className="h-[5px]" />
      {EDIT_TOOLS.map((t) => (
        <SideButton key={t.title} title={t.title}>{t.icon}</SideButton>
      ))}
      <div className="h-[5px]" />
      <SideButton title="Snap" on>
        <Icon>
          <path d="M4 2h4v9l1 1h1l1-1V2h4v10l-3 4H7l-3-4z" fill="#ff0000" stroke="none" />
          <path d="M4 2h3v2H4zM12 2h3v2h-3z" fill="#fff" />
        </Icon>
      </SideButton>
    </div>
  </aside>
);

const TitleBar = () => (
  <header className="relative flex h-[29px] shrink-0 items-center justify-between overflow-hidden border-b border-b-[#4a5560] bg-gradient-to-r from-[#8fa9c8] via-[#b9dbf8] via-50% to-[#c3dffa]">
    <div className="absolute inset-y-0 left-0 w-[520px] bg-gradient-to-b from-[#9dacbc] via-[#d3dae2] to-[#a0abb6]" />
    <div className="absolute inset-y-0 left-[420px] w-[420px] bg-gradient-to-r from-[#a3b4c6] to-transparent" />
    <div className="absolute top-[11px] left-[430px] h-2 w-[310px] bg-[#6d8296] opacity-60 blur-[4px]" />
    <div className="absolute bottom-0 left-0 h-1 w-[1500px] bg-[#5b6c7c] opacity-50 blur-[3px]" />
    <div className="absolute inset-y-0 right-0 w-[420px] bg-gradient-to-r from-[#13304e] via-[#24496f] to-[#3c5c7e]" />
    <div className="relative flex items-center gap-[6px]">
      <svg width={20} height={28} className="block">
        <path d="M0 11l7 1 12-3v8l-19 3z" fill="#0000e0" />
        <path d="M0 19l5-6 4 4 3-4 3 1 4-5" fill="none" stroke="#d01030" strokeWidth={2} />
      </svg>
      <h1 className="font-[Open_Sans,sans-serif] text-sm leading-none text-black">
        Advanced GET for TS2000i - [EUROFX - EURO FUTURES, 240]
      </h1>
    </div>
    <div className="relative mr-[3px] flex h-[25px] self-start rounded-b-md border border-t-0 border-[#8fa3b8]">
      <button aria-label="Minimize" className="flex w-[38px] items-end justify-center border-r border-[#8fa3b8] pb-[5px]">
        <span className="h-[6px] w-[18px] rounded-xs border border-[#3c4654] bg-white" />
      </button>
      <button aria-label="Restore" className="flex w-9 items-center justify-center border-r border-[#8fa3b8]">
        <svg width={20} height={18} fill="#f4f4f4" stroke="#3c4654">
          <path d="M4.500.5h15v13h-15z" />
          <path d="M.5 3.500h16v14h-16z" />
          <path d="M5.500 8.500h6v4h-6z" fill="#7890a8" />
        </svg>
      </button>
      <button aria-label="Close" className="flex w-[63px] items-center justify-center">
        <svg width={20} height={17} fill="#f4f4f4" stroke="#3c4654">
          <path d="M1 1h6l3 4 3-4h6l-6 7.500 6 7.500h-6l-3-4-3 4H1l6-7.500z" />
        </svg>
      </button>
    </div>
  </header>
);

const MdiButton = ({ label, children }: { label: string; children: React.ReactNode }) => (
  <button aria-label={label} className="flex h-[27px] w-[23px] items-center justify-center border border-[#a3b3c8] bg-[#e1edf9]">
    <svg width={10} height={10} fill="none" stroke="#8494a6" strokeWidth={2}>{children}</svg>
  </button>
);

const MENU = ["File", "Page", "Chart", "Tools", "View", "Window", "Help"];

const MenuBar = () => (
  <nav className="flex h-[30px] shrink-0 items-center justify-between border-b-2 border-b-[#a8a8b0] bg-gradient-to-b from-white via-[#d5dcee] via-40% to-[#e2e7f5]">
    <div className="flex items-center pl-2">
      <Icon><path d="M8.500.5h3v4h3v3h-3v9h-4v-2h-3v-3h4z" fill="#fff" /></Icon>
      <div className="flex gap-[15px] pl-2">
        {MENU.map((m) => (
          <button key={m} className="font-[Open_Sans,sans-serif] text-sm leading-none text-[#6d6d6d]">{m}</button>
        ))}
      </div>
    </div>
    <div className="flex gap-px pr-px">
      <MdiButton label="Minimize chart"><path d="M2 8h6" /></MdiButton>
      <MdiButton label="Restore chart"><path d="M1 5h5v4H1zM4 4V1h5v5H7" strokeWidth={1} /></MdiButton>
      <MdiButton label="Close chart"><path d="M2 2l6 6M8 2L2 8" /></MdiButton>
    </div>
  </nav>
);

const InfoBar = () => (
  <div className="flex h-5 items-center border-t border-t-[#505050] bg-[#0000ff] px-[6px] text-base leading-none font-bold text-white">
    <span className="w-[39%]">12/07/22</span>
    <span className="w-[114px]">O: 1.0470</span>
    <span className="w-[67px]">1.0475</span>
    <span className="w-[23px] text-[#ff0000]">L:</span>
    <span className="w-[66px]">1.0459</span>
    <span>C: 1.0474</span>
    <span className="ml-auto text-[#ff0000]">-0.0000</span>
  </div>
);

const LEGEND = [
  { name: "OP", value: "1.0059", color: "text-[#a6caf0]" },
  { name: "HI", value: "1.0065", color: "text-[#a6caf0]" },
  { name: "LO", value: "1.0011", color: "text-[#a6caf0]" },
  { name: "CL", value: "1.0052", color: "text-[#a6caf0]" },
  { name: "MA", value: "0.9927", color: "text-[#ffff00]" },
  { name: "MA", value: "0.9991", color: "text-[#ff00ff]" },
];

const TABS = ["Osc 5,35", "Osc 16,64", "CCI 64", "ADX/DMI 64"];

const StudyTabs = () => (
  <div className="flex h-[22px] bg-[#f0f0f0] text-[10px] text-black">
    <button aria-label="Previous study" className={`flex w-[21px] items-center justify-center ${raised}`}>
      <svg width={6} height={10}><path d="M6 0v10L0 5z" /></svg>
    </button>
    <button aria-label="Next study" className={`mr-[2px] flex w-[21px] items-center justify-center ${raised}`}>
      <svg width={6} height={10}><path d="M0 0v10l6-5z" /></svg>
    </button>
    {TABS.map((t) => {
      const active = t === "ADX/DMI 64";
      return (
        <button key={t} className="flex h-5 items-stretch">
          <svg width={7} height={20}>
            <path d="M0 0l6 19h1V0z" fill={active ? "#fff" : "#f0f0f0"} />
            <path d="M0 0l6 19.500h1" fill="none" stroke="#000" />
          </svg>
          <span className={`border-b border-b-black px-px leading-[17px] ${active ? "bg-white" : ""}`}>{t}</span>
          <svg width={7} height={20} className="-mr-[3px]">
            <path d="M7 0L1 19H0V0z" fill={active ? "#fff" : "#f0f0f0"} />
            <path d="M7 0L1 19.500H0" fill="none" stroke="#000" />
          </svg>
        </button>
      );
    })}
  </div>
);

const App: React.FC = () => {
  return (
    <div className="flex min-h-screen flex-col bg-[#f0f0f0] font-[Liberation_Sans,Arial,sans-serif]">
      <TitleBar />
      <MenuBar />
      <Toolbar />
      <div className="flex">
        <ChartToolbar />
        <main className="min-w-0 flex-1 border-l-2 border-l-[#808080]">
          <InfoBar />
          <div className="h-[6px] border-t-4 border-b-2 border-t-[#f4f4f4] border-b-[#707070]" />

          {/* Price panel */}
          <div className="flex">
            <div className="relative min-w-0 flex-1 overflow-hidden">
              <PriceChart />
              <dl className="absolute top-0 left-0 pl-px text-base leading-[19px] font-bold">
                {LEGEND.map((l, i) => (
                  <div key={i} className={`flex w-[83px] bg-black ${l.color}`}>
                    <dt className="w-[31px]">{l.name}</dt>
                    <dd>{l.value}</dd>
                  </div>
                ))}
              </dl>
            </div>
            <div className="w-[71px] shrink-0">
              <PriceAxis />
            </div>
          </div>
          <div className="h-[6px] border-t-4 border-b-2 border-t-[#f8f8f8] border-b-[#707070]" />

          {/* Study panel */}
          <div className="flex">
            <div className="relative min-w-0 flex-1 overflow-hidden">
              <StudyChart />
              <div className="absolute top-0 left-0 w-[92px] text-base leading-[19px] font-bold whitespace-nowrap">
                <p className="bg-black text-[#fffff0]">ADX/DMI 64</p>
                <p className="w-[83px] bg-black pl-px text-[#ff00ff]">ADX 10.01</p>
                <p className="w-[83px] bg-black pl-px text-[#0000ff]">+DM 29.80</p>
                <p className="w-[83px] bg-black pl-px text-[#ff0000]">-DM&nbsp; 29.20</p>
              </div>
              <StudyTabs />
            </div>
            <div className="w-[71px] shrink-0">
              <StudyAxis />
            </div>
          </div>
          <div className="h-[5px] border-t-2 border-b-2 border-t-white border-b-[#707070]" />

          {/* Date strip */}
          <div className="flex h-[22px] border-b-2 border-b-[#a0a0a0]">
            <div className="flex min-w-0 flex-1 overflow-hidden border-l border-l-white bg-black pl-[43px] text-base leading-[21px] font-bold text-white">
              {DATES.map((d) => (
                <span key={d} className="w-[90px] shrink-0 border-l border-l-white pl-px">{d}</span>
              ))}
            </div>
            <div className="w-[71px] shrink-0 border-l border-l-white bg-[#0000ff]" />
          </div>
        </main>
        <DrawToolbar />
      </div>
      <footer className="flex flex-1 border-t border-t-white pt-[3px] font-[Open_Sans,sans-serif] text-sm leading-5 text-black">
        <span className="flex-1 pl-[2px]">For Help, press F1</span>
        <span className="w-[486px] border-t border-l border-[#a0a0a0] pl-px leading-[18px]">Page: 10 - EURO M</span>
      </footer>
    </div>
  );
};

export default App;
